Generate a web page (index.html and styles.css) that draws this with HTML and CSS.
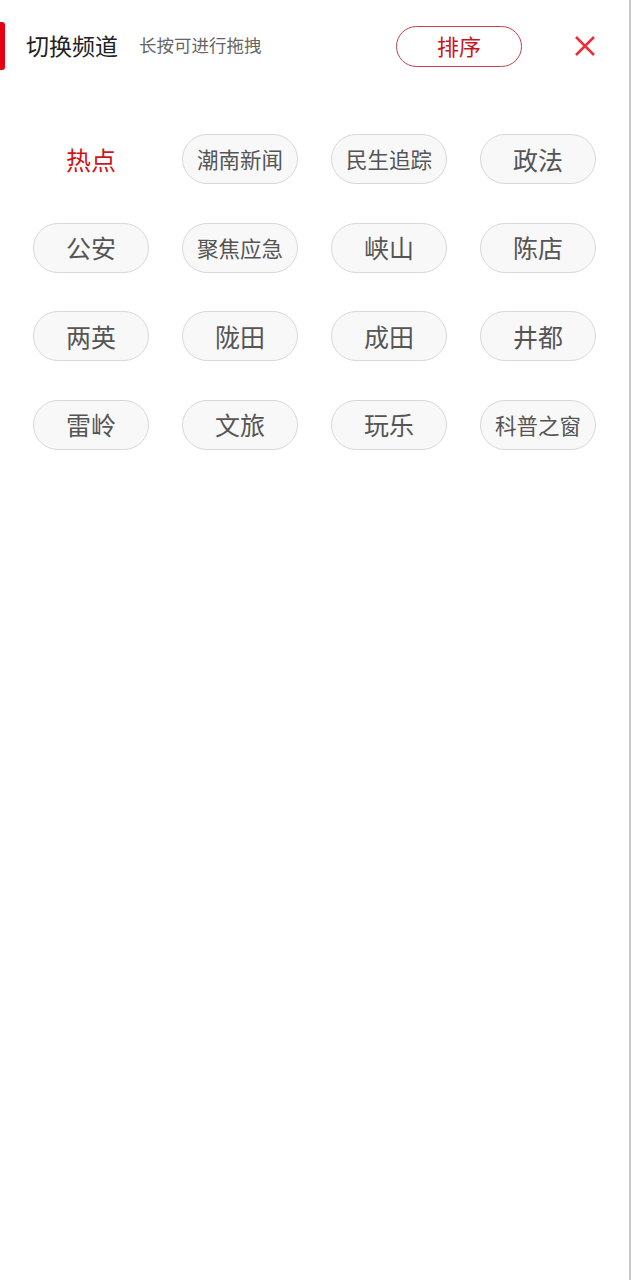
FILE: index.html
```html
<!DOCTYPE html>
<html lang="zh">
<head>
<meta charset="utf-8">
<link rel="stylesheet" href="styles.css">
</head>
<body>
<div class="page">
  <header class="header">
    <div class="bar"></div>
    <h1 class="title">切换频道</h1>
    <span class="sub">长按可进行拖拽</span>
    <button class="sort">排序</button>
    <span class="close">
      <svg width="22" height="22" viewBox="0 0 22 22"><path d="M2 2L20 20M20 2L2 20" stroke="#e8323a" stroke-width="2.6" fill="none"/></svg>
    </span>
  </header>
  <div class="grid">
    <div class="chip active">热点</div>
    <div class="chip small">潮南新闻</div>
    <div class="chip small">民生追踪</div>
    <div class="chip">政法</div>
    <div class="chip">公安</div>
    <div class="chip small">聚焦应急</div>
    <div class="chip">峡山</div>
    <div class="chip">陈店</div>
    <div class="chip">两英</div>
    <div class="chip">陇田</div>
    <div class="chip">成田</div>
    <div class="chip">井都</div>
    <div class="chip">雷岭</div>
    <div class="chip">文旅</div>
    <div class="chip">玩乐</div>
    <div class="chip small">科普之窗</div>
  </div>
</div>
</body>
</html>
```

FILE: styles.css
```css
html, body {
  margin: 0;
  padding: 0;
  background: #fff;
}
body {
  font-family: "Noto Sans CJK SC", "Noto Sans", sans-serif;
}
.page {
  width: 629px;
  min-height: 1280px;
  border-right: 2px solid #c8c8c8;
  box-sizing: content-box;
}
.header {
  display: flex;
  align-items: center;
  height: 48px;
  padding-top: 22px;
}
.bar {
  width: 5px;
  height: 48px;
  background: #e60012;
  border-radius: 0 3px 3px 0;
}
.title {
  margin: -2px 0 0 21px;
  font-size: 23px;
  font-weight: 400;
  color: #222;
  line-height: 1;
}
.sub {
  margin: -2px 0 0 21px;
  font-size: 17.5px;
  color: #666;
  line-height: 1;
}
.sort {
  margin-left: auto;
  width: 126px;
  height: 41px;
  border: 1px solid #c0424a;
  border-radius: 21px;
  background: #fff;
  color: #c8161e;
  font-family: inherit;
  font-size: 22px;
  padding: 0 0 3px;
  line-height: 1;
  margin-top: 1px;
}
.close {
  display: flex;
  margin-left: 52px;
  margin-right: 33px;
}
.grid {
  display: grid;
  grid-template-columns: repeat(4, 116px);
  column-gap: 33px;
  row-gap: 38.67px;
  padding: 64px 0 0 33px;
}
.chip {
  height: 48px;
  border: 1px solid #d8d8d8;
  border-radius: 25px;
  background: #f8f8f8;
  display: flex;
  align-items: center;
  justify-content: center;
  font-size: 25px;
  color: #555;
  line-height: 1;
}
.chip.small {
  font-size: 21.5px;
}
.chip.active {
  border-color: transparent;
  background: transparent;
  color: #d0141c;
}
```
